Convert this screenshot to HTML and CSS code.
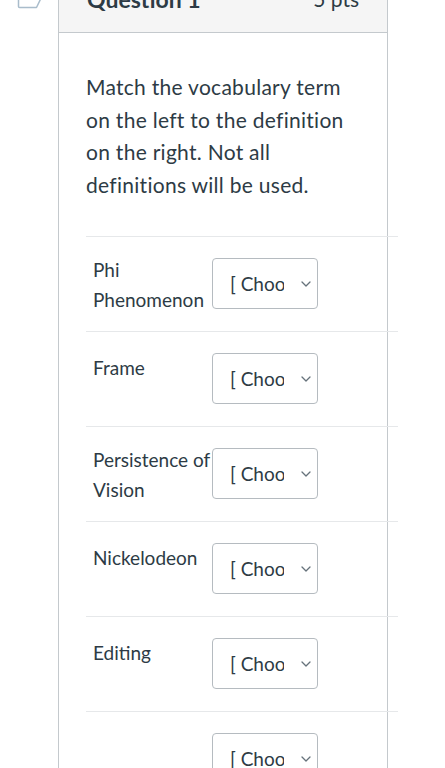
FILE: index.html
```html
<!DOCTYPE html>
<html lang="en">

<head>
    <meta charset="UTF-8">
    <meta name="viewport" content="width=device-width, initial-scale=1.0">
    <title>Quiz - Question 1</title>
    <link rel="stylesheet" href="styles.css">
</head>

<body>
    <div class="page">
        <div class="flag">
            <svg width="30" height="10" viewBox="0 0 30 10">
                <path d="M1.5 -20 V6.5 Q1.5 7.5 2.5 7.5 H19.5 L27 -8" fill="none" stroke="#a9bccb" stroke-width="1.5" stroke-linejoin="round" />
            </svg>
        </div>

        <div class="question">
            <div class="question-header">
                <span class="question-name">Question 1</span>
                <span class="question-points">5 pts</span>
            </div>

            <div class="question-body">
                <div class="question-text">
                    Match the vocabulary term on the left to the definition on the right. Not all definitions will be used.
                </div>

                <div class="answers">
                    <div class="answer">
                        <div class="answer-term answer-term--wrap">Phi Phenomenon</div>
                        <div class="select">
                            <span class="select-value">[ Choose ]</span>
                            <svg class="select-arrow" width="10" height="6" viewBox="0 0 10 6"><path d="M1 1 L5 5 L9 1" /></svg>
                        </div>
                    </div>
                    <div class="answer">
                        <div class="answer-term">Frame</div>
                        <div class="select">
                            <span class="select-value">[ Choose ]</span>
                            <svg class="select-arrow" width="10" height="6" viewBox="0 0 10 6"><path d="M1 1 L5 5 L9 1" /></svg>
                        </div>
                    </div>
                    <div class="answer">
                        <div class="answer-term answer-term--wrap">Persistence of Vision</div>
                        <div class="select">
                            <span class="select-value">[ Choose ]</span>
                            <svg class="select-arrow" width="10" height="6" viewBox="0 0 10 6"><path d="M1 1 L5 5 L9 1" /></svg>
                        </div>
                    </div>
                    <div class="answer">
                        <div class="answer-term">Nickelodeon</div>
                        <div class="select">
                            <span class="select-value">[ Choose ]</span>
                            <svg class="select-arrow" width="10" height="6" viewBox="0 0 10 6"><path d="M1 1 L5 5 L9 1" /></svg>
                        </div>
                    </div>
                    <div class="answer">
                        <div class="answer-term">Editing</div>
                        <div class="select">
                            <span class="select-value">[ Choose ]</span>
                            <svg class="select-arrow" width="10" height="6" viewBox="0 0 10 6"><path d="M1 1 L5 5 L9 1" /></svg>
                        </div>
                    </div>
                    <div class="answer">
                        <div class="answer-term"></div>
                        <div class="select">
                            <span class="select-value">[ Choose ]</span>
                            <svg class="select-arrow" width="10" height="6" viewBox="0 0 10 6"><path d="M1 1 L5 5 L9 1" /></svg>
                        </div>
                    </div>
                </div>
            </div>
        </div>
    </div>
</body>

</html>
```

FILE: styles.css
```css
html,
body {
    margin: 0;
    background-color: #fff;
    overflow: hidden;
}

body {
    font-family: Lato, "Open Sans", sans-serif;
    color: #2d3b45;
}

.page {
    display: flex;
    align-items: flex-start;
    padding-left: 17px;
}

.flag {
    width: 41px;
    flex-shrink: 0;
}

.flag svg {
    display: block;
    overflow: visible;
}

.question {
    width: 328px;
    margin-top: -33px;
    border: 1px solid #c4c9cd;
    border-bottom: none;
}

.question-header {
    display: flex;
    justify-content: space-between;
    align-items: flex-end;
    padding: 18px 28px 20px;
    line-height: 26px;
    background-color: #f5f5f5;
    border-bottom: 1px solid #c4c9cd;
}

.question-name {
    font-size: 23px;
    font-weight: bold;
}

.question-points {
    font-size: 21px;
}

.question-body {
    padding: 38px 0 0 27px;
}

.question-text {
    padding-right: 40px;
    font-size: 21px;
    letter-spacing: 0.28px;
    line-height: 32.5px;
}

.answers {
    margin-top: 35px;
    margin-right: -11px;
}

.answer {
    display: flex;
    align-items: flex-start;
    padding: 21px 0 22px 7px;
    border-top: 1px solid #e6e8ea;
}

.answer-term {
    width: 119px;
    flex-shrink: 0;
    font-size: 19px;
    line-height: 30px;
}

/* two line terms sit a little higher and must not stretch the row */
.answer-term--wrap {
    margin-top: -3px;
    margin-bottom: -10px;
}

.select {
    display: flex;
    align-items: center;
    box-sizing: border-box;
    width: 106px;
    height: 51px;
    padding: 0 6px 0 17px;
    border: 1px solid #b5bbc0;
    border-radius: 4px;
}

.select-value {
    width: 54px;
    overflow: hidden;
    white-space: nowrap;
    font-size: 19px;
}

.select-arrow {
    margin-left: auto;
}

.select-arrow path {
    fill: none;
    stroke: #66727b;
    stroke-width: 1.3;
    stroke-linecap: round;
    stroke-linejoin: round;
}
```
